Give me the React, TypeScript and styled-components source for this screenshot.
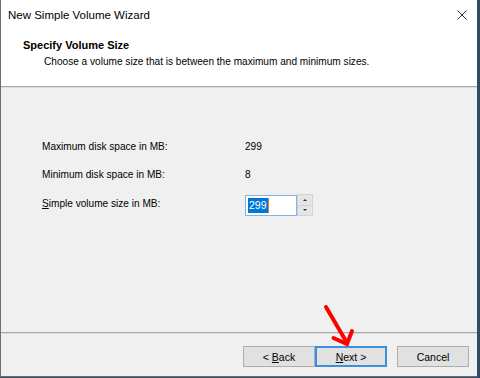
import styled, { createGlobalStyle } from 'styled-components';

const GlobalStyle = createGlobalStyle`
  html, body {
    margin: 0;
    padding: 0;
    background: #2f4d69;
  }
  body {
    font-family: "Liberation Sans", Arial, sans-serif;
    color: #000;
  }
`;

const Screen = styled.div`
  position: relative;
  width: 480px;
  height: 378px;
  overflow: hidden;
`;

const Window = styled.div`
  width: 477px;
  height: 377px;
  display: flex;
  flex-direction: column;
  background: #f0f0f0;
  border-left: 1px solid #6e6e6e;
  border-bottom: 1px solid #6e6e6e;
  box-sizing: border-box;
`;

const TitleBar = styled.div`
  height: 30px;
  flex: none;
  display: flex;
  align-items: center;
  justify-content: space-between;
  padding-left: 7px;
  background: #fff;
`;

const TitleText = styled.span`
  font-size: 11.5px;
  color: #000;
`;

const CloseButton = styled.div`
  width: 46px;
  height: 30px;
  display: flex;
  align-items: center;
  justify-content: center;
  margin-right: -8px;
`;

const Header = styled.div`
  height: 56px;
  flex: none;
  background: #fff;
  display: flex;
  flex-direction: column;
  padding: 8px 0 0 22px;
  box-sizing: border-box;
`;

const Heading = styled.div`
  font-size: 11px;
  font-weight: bold;
  line-height: 14px;
`;

const Subtitle = styled.div`
  font-size: 10.1px;
  line-height: 14px;
  margin-top: 3px;
  padding-left: 21px;
`;

const Rule = styled.div`
  height: 0;
  flex: none;
  border-top: 1px solid #a8a8a8;
  border-bottom: 1px solid #dcdcdc;
`;

const Body = styled.div`
  flex: 1;
  padding: 48px 0 0 41px;
`;

const Form = styled.div`
  display: grid;
  grid-template-columns: 203px auto;
  grid-auto-rows: 21px;
  row-gap: 7px;
  font-size: 10.1px;
`;

const Label = styled.div<{ $top?: boolean }>`
  display: flex;
  align-items: ${({ $top }) => ($top ? 'flex-start' : 'center')};
  padding-top: ${({ $top }) => ($top ? '3px' : '0')};
  margin-top: ${({ $top }) => ($top ? '3px' : '0')};
`;

const Value = styled.div`
  display: flex;
  align-items: center;
`;

const Spinner = styled.div`
  display: flex;
  margin-top: 3px;
`;

const Input = styled.div`
  width: 52px;
  height: 21px;
  box-sizing: border-box;
  border: 1px solid #7fb3e6;
  background: #fff;
  display: flex;
  align-items: center;
  padding-left: 2px;
  font-size: 10.5px;
`;

const Selected = styled.span`
  background: #0078d7;
  color: #fff;
  padding: 1px 1px;
  line-height: 13px;
  border-right: 1px solid #e07a2a;
`;

const SpinButtons = styled.div`
  width: 16px;
  height: 22px;
  margin-top: -1px;
  box-sizing: border-box;
  border: 1px solid #d4d4d4;
  background: #e6e6e6;
  display: flex;
  flex-direction: column;
`;

const SpinButton = styled.div<{ $down?: boolean }>`
  flex: 1;
  display: flex;
  align-items: center;
  justify-content: center;
  border-top: ${({ $down }) => ($down ? '1px solid #d4d4d4' : 'none')};
  &::after {
    content: '';
    border-left: 2px solid transparent;
    border-right: 2px solid transparent;
    ${({ $down }) =>
      $down ? 'border-top: 2px solid #333;' : 'border-bottom: 2px solid #333;'}
  }
`;

const Footer = styled.div`
  height: 42px;
  flex: none;
  display: flex;
  justify-content: flex-end;
  align-items: flex-start;
  padding: 12px 8px 0 0;
  box-sizing: border-box;
`;

const Button = styled.div<{ $focused?: boolean; $gap?: boolean }>`
  width: 72px;
  height: 21px;
  box-sizing: border-box;
  display: flex;
  align-items: center;
  justify-content: center;
  font-size: 10.5px;
  background: #e1e1e1;
  border: ${({ $focused }) => ($focused ? '2px solid #3c8fdc' : '1px solid #adadad')};
  margin-left: ${({ $gap }) => ($gap ? '10px' : '0')};
  u {
    text-decoration: underline;
  }
`;

const Arrow = styled.svg`
  position: absolute;
  left: 318px;
  top: 300px;
`;

export default function App() {
  return (
    <Screen>
      <GlobalStyle />
      <Window>
        <TitleBar>
          <TitleText>New Simple Volume Wizard</TitleText>
          <CloseButton>
            <svg width="10" height="10" viewBox="0 0 10 10">
              <path d="M0.5 0.5 L9.5 9.5 M9.5 0.5 L0.5 9.5" stroke="#333" strokeWidth="1" />
            </svg>
          </CloseButton>
        </TitleBar>
        <Header>
          <Heading>Specify Volume Size</Heading>
          <Subtitle>Choose a volume size that is between the maximum and minimum sizes.</Subtitle>
        </Header>
        <Rule />
        <Body>
          <Form>
            <Label>Maximum disk space in MB:</Label>
            <Value>299</Value>
            <Label>Minimum disk space in MB:</Label>
            <Value>8</Value>
            <Label $top>
              <span>
                <u>S</u>imple volume size in MB:
              </span>
            </Label>
            <Spinner>
              <Input>
                <Selected>299</Selected>
              </Input>
              <SpinButtons>
                <SpinButton />
                <SpinButton $down />
              </SpinButtons>
            </Spinner>
          </Form>
        </Body>
        <Rule />
        <Footer>
          <Button>
            &lt;&nbsp;<u>B</u>ack
          </Button>
          <Button $focused>
            <u>N</u>ext&nbsp;&gt;
          </Button>
          <Button $gap>Cancel</Button>
        </Footer>
      </Window>
      <Arrow width="40" height="48" viewBox="0 0 40 48">
        <path d="M8 7 L28.5 42" stroke="#f00" strokeWidth="4" strokeLinecap="round" />
        <path d="M15.5 38 L29 44 L34 31" stroke="#f00" strokeWidth="4" fill="none" strokeLinecap="round" strokeLinejoin="miter" />
      </Arrow>
    </Screen>
  );
}
